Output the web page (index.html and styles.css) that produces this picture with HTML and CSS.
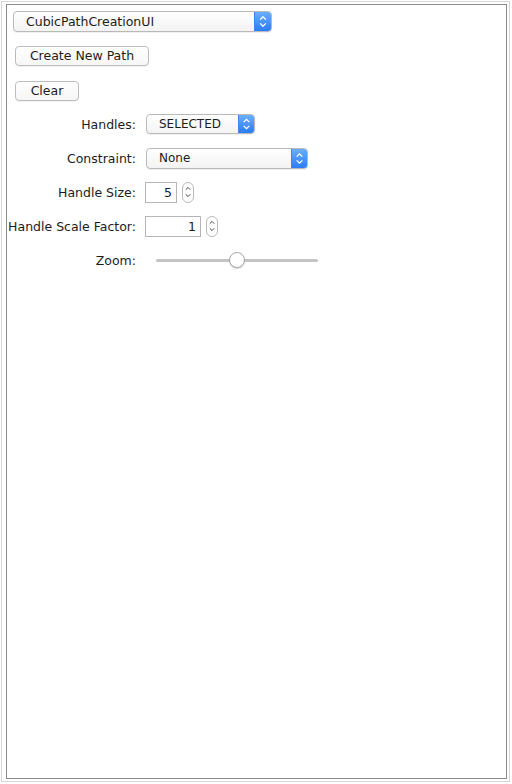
FILE: index.html
```html
<!DOCTYPE html>
<html>
<head>
<meta charset="utf-8">
<link rel="stylesheet" href="styles.css">
</head>
<body>
<div class="outer">
  <div class="inner">
    <div class="combo combo-main">
      <span class="combo-text">CubicPathCreationUI</span>
      <span class="combo-arrow">
        <svg width="17" height="21" viewBox="0 0 17 21"><path d="M5.5 8.5 L8.5 5.5 L11.5 8.5 M5.5 12.5 L8.5 15.5 L11.5 12.5" fill="none" stroke="#fff" stroke-width="1.4"/></svg>
      </span>
    </div>
    <button class="btn btn-create">Create New Path</button>
    <button class="btn btn-clear">Clear</button>
    <div class="form">
      <div class="label">Handles:</div>
      <div class="ctrl">
        <div class="combo combo-handles">
          <span class="combo-text">SELECTED</span>
          <span class="combo-arrow">
            <svg width="16" height="20" viewBox="0 0 16 20"><path d="M5 8 L8 5 L11 8 M5 12 L8 15 L11 12" fill="none" stroke="#fff" stroke-width="1.4"/></svg>
          </span>
        </div>
      </div>
      <div class="label">Constraint:</div>
      <div class="ctrl">
        <div class="combo combo-constraint">
          <span class="combo-text">None</span>
          <span class="combo-arrow">
            <svg width="16" height="21" viewBox="0 0 16 21"><path d="M5 8.5 L8 5.5 L11 8.5 M5 12.5 L8 15.5 L11 12.5" fill="none" stroke="#fff" stroke-width="1.4"/></svg>
          </span>
        </div>
      </div>
      <div class="label">Handle Size:</div>
      <div class="ctrl">
        <div class="field field-size">5</div>
        <div class="spinner">
          <svg width="11" height="20" viewBox="0 0 11 20"><path d="M3 7.5 L5.5 5 L8 7.5 M3 12.5 L5.5 15 L8 12.5" fill="none" stroke="#444" stroke-width="1.1"/></svg>
        </div>
      </div>
      <div class="label">Handle Scale Factor:</div>
      <div class="ctrl">
        <div class="field field-scale">1</div>
        <div class="spinner">
          <svg width="11" height="20" viewBox="0 0 11 20"><path d="M3 7.5 L5.5 5 L8 7.5 M3 12.5 L5.5 15 L8 12.5" fill="none" stroke="#444" stroke-width="1.1"/></svg>
        </div>
      </div>
      <div class="label">Zoom:</div>
      <div class="ctrl">
        <div class="slider">
          <div class="track"></div>
          <div class="thumb"></div>
        </div>
      </div>
    </div>
  </div>
</div>
</body>
</html>
```
FILE: styles.css
```css
* { box-sizing: border-box; }
html, body {
  margin: 0;
  padding: 0;
  background: #fff;
}
body {
  width: 512px;
  height: 784px;
  font-family: "DejaVu Sans", "Liberation Sans", sans-serif;
  font-size: 12px;
  color: #1c1c1c;
}
.outer {
  margin: 1px;
  width: 509px;
  height: 781px;
  border: 1px solid #d6d6d6;
  padding: 2px 2px 2px 4px;
}
.inner {
  height: 100%;
  border: 1px solid #8c8c8c;
  padding: 6px 0 0 6px;
  display: flex;
  flex-direction: column;
  align-items: flex-start;
}
.combo {
  display: flex;
  align-items: stretch;
  background: linear-gradient(#ffffff, #f3f3f3);
  border: 1px solid #b9b9b9;
  border-radius: 4px;
  box-shadow: 0 1px 0 rgba(0,0,0,0.06);
  overflow: hidden;
}
.combo-text {
  flex: 1;
  display: flex;
  align-items: center;
  padding-left: 12px;
}
.combo-arrow {
  display: flex;
  align-items: center;
  justify-content: center;
  background: linear-gradient(#6aaefc, #2b7cf7);
  border-left: 1px solid #3d85ef;
}
.combo-main {
  width: 259px;
  height: 21px;
  font-size: 12.5px;
}
.combo-main .combo-arrow { width: 17px; }
.btn {
  font-family: inherit;
  font-size: 12.5px;
  color: #1c1c1c;
  background: linear-gradient(#ffffff, #f6f6f6);
  border: 1px solid #bdbdbd;
  border-radius: 4px;
  box-shadow: 0 1px 0 rgba(0,0,0,0.05);
  height: 20px;
  padding: 0;
  line-height: 18px;
}
.btn-create {
  margin-top: 14px;
  margin-left: 2px;
  width: 134px;
}
.btn-clear {
  margin-top: 15px;
  margin-left: 2px;
  width: 64px;
}
.form {
  margin-top: 6px;
  margin-left: -6px;
  display: grid;
  grid-template-columns: 129px auto;
  grid-auto-rows: 34px;
  column-gap: 9px;
  width: 100%;
}
.label {
  display: flex;
  align-items: center;
  justify-content: flex-end;
  white-space: nowrap;
  font-size: 12.5px;
}
.ctrl {
  display: flex;
  align-items: center;
}
.combo-handles {
  margin-left: 1px;
  width: 109px;
  height: 20px;
}
.combo-handles .combo-arrow, .combo-constraint .combo-arrow { width: 16px; }
.combo-constraint {
  margin-left: 1px;
  width: 162px;
  height: 21px;
}
.field {
  height: 21px;
  border: 1px solid #b5b5b5;
  background: #fff;
  display: flex;
  align-items: center;
  justify-content: flex-end;
  padding-right: 4px;
  font-size: 12.5px;
}
.field-size { width: 32px; }
.field-scale { width: 56px; }
.spinner {
  margin-left: 5px;
  width: 12px;
  height: 21px;
  border: 1px solid #b9b9b9;
  border-radius: 6px;
  background: #fff;
  display: flex;
  align-items: center;
  justify-content: center;
}
.slider {
  position: relative;
  margin-left: 11px;
  width: 162px;
  height: 18px;
  display: flex;
  align-items: center;
}
.track {
  width: 100%;
  height: 3px;
  border-radius: 2px;
  background: #c4c4c4;
}
.thumb {
  position: absolute;
  left: 73px;
  top: 1px;
  width: 16px;
  height: 16px;
  border-radius: 50%;
  background: #fff;
  border: 1px solid #a8a8a8;
  box-shadow: 0 1px 1px rgba(0,0,0,0.15);
}
```
